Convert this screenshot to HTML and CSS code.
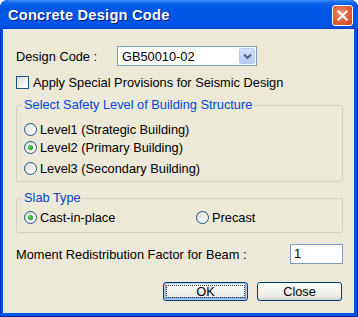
FILE: index.html
```html
<!DOCTYPE html>
<html>
<head>
<meta charset="utf-8">
<link rel="stylesheet" href="styles.css">
</head>
<body>
<div class="window">
  <div class="titlebar">
    <span class="title">Concrete Design Code</span>
    <span class="close">
      <svg width="13" height="13" viewBox="0 0 13 13"><path d="M2.5 2.5 L10.5 10.5 M10.5 2.5 L2.5 10.5" stroke="#fff" stroke-width="2.2" stroke-linecap="square"/></svg>
    </span>
  </div>
  <div class="client">
    <div class="code-row">
      <span class="code-label">Design Code :</span>
      <div class="combo">
        <span class="combo-text">GB50010-02</span>
        <span class="combo-btn">
          <svg width="9" height="7" viewBox="0 0 9 7"><path d="M1 1.5 L4.5 5 L8 1.5" fill="none" stroke="#4D6185" stroke-width="2"/></svg>
        </span>
      </div>
    </div>
    <div class="check-row"><span class="checkbox"></span><span>Apply Special Provisions for Seismic Design</span></div>
    <fieldset class="group safety">
      <legend>Select Safety Level of Building Structure</legend>
      <div class="radio-row r1"><span class="radio"></span><span>Level1 (Strategic Building)</span></div>
      <div class="radio-row r2"><span class="radio checked"></span><span>Level2 (Primary Building)</span></div>
      <div class="radio-row r3"><span class="radio"></span><span>Level3 (Secondary Building)</span></div>
    </fieldset>
    <fieldset class="group slab">
      <legend>Slab Type</legend>
      <div class="slab-grid">
        <div class="radio-row"><span class="radio checked"></span><span>Cast-in-place</span></div>
        <div class="radio-row"><span class="radio"></span><span>Precast</span></div>
      </div>
    </fieldset>
    <div class="moment-row">
      <span>Moment Redistribution Factor for Beam :</span>
      <div class="input">1</div>
    </div>
    <div class="buttons">
      <div class="btn default"><span class="focus">OK</span></div>
      <div class="btn">Close</div>
    </div>
  </div>
</div>
</body>
</html>
```

FILE: styles.css
```css
html, body {
  margin: 0;
  padding: 0;
  background: #ffffff;
}
body {
  width: 358px;
  height: 317px;
  overflow: hidden;
  font-family: "Liberation Sans", Arial, sans-serif;
  font-size: 12.8px;
  color: #000;
}
.window {
  width: 358px;
  height: 317px;
  box-sizing: border-box;
  border-radius: 8px 8px 0 0;
  background: #0055EA;
  box-shadow: inset 1px 0 #0831D9, inset -1px 0 #001EA0, inset 0 -1px #001EA0;
  display: flex;
  flex-direction: column;
  overflow: hidden;
}
.titlebar {
  height: 29px;
  flex: none;
  display: flex;
  align-items: flex-start;
  justify-content: space-between;
  padding: 0 5px 0 8px;
  border-radius: 8px 8px 0 0;
  background: linear-gradient(#3A8CF7 0, #1E74F4 2px, #0A5FEB 4px, #0058E6 8px, #0054E3 50%, #0055EA 80%, #0050E0 93%, #003EC8 100%);
}
.title {
  margin-top: 6px;
  color: #fff;
  font-weight: bold;
  font-size: 14.6px;
  line-height: 18px;
  letter-spacing: 0.25px;
  text-shadow: 1px 1px 0 #0A1883;
}
.close {
  margin-top: 5px;
  width: 21px;
  height: 21px;
  box-sizing: border-box;
  border: 1px solid #fff;
  border-radius: 3px;
  background: radial-gradient(circle at 40% 35%, #F0947C 0, #E4623F 45%, #D0451F 100%);
  display: flex;
  align-items: center;
  justify-content: center;
}
.close svg { display: block; }
.client {
  flex: 1;
  margin: 0 4px 4px 3px;
  background: #ECE9D8;
  padding: 17px 11px 0 13px;
  display: flex;
  flex-direction: column;
}
.code-row {
  display: flex;
  align-items: center;
  height: 20px;
}
.code-label {
  width: 101px;
}
.combo {
  width: 140px;
  height: 20px;
  box-sizing: border-box;
  border: 1px solid #7F9DB9;
  background: #fff;
  display: flex;
  align-items: center;
  justify-content: space-between;
  padding: 0 1px 0 4px;
}
.combo-btn {
  width: 16px;
  height: 16px;
  box-sizing: border-box;
  border-radius: 2px;
  border: 1px solid #B9CDF8;
  background: linear-gradient(#D2E0FD, #B3C9F7);
  display: flex;
  align-items: center;
  justify-content: center;
}
.combo-btn svg { display: block; }
.check-row {
  margin-top: 8px;
  height: 16px;
  display: flex;
  align-items: center;
  gap: 4px;
}
.checkbox {
  width: 13px;
  height: 13px;
  box-sizing: border-box;
  border: 1px solid #1C5180;
  background: linear-gradient(135deg, #DCDCD7 0, #F6F6F4 70%, #FFFFFF 100%);
}
.group {
  margin: 0;
  border: 1px solid #D0D0BF;
  border-radius: 3px;
  padding: 0 6px 0 7px;
  min-width: 0;
}
.group legend {
  color: #0046D5;
  line-height: 14px;
  padding: 0 2px;
  margin-left: -2px;
}
.safety {
  margin-top: 8px;
  padding-bottom: 5px;
}
.radio-row {
  height: 16px;
  display: flex;
  align-items: center;
  gap: 3px;
}
.r1 { margin-top: 9px; }
.r2 { margin-top: 2px; }
.r3 { margin-top: 5px; }
.radio {
  width: 13px;
  height: 13px;
  box-sizing: border-box;
  border-radius: 50%;
  border: 1px solid #1C5180;
  background: linear-gradient(135deg, #DCDCD7 0, #F6F6F4 70%, #FFFFFF 100%);
  display: flex;
  align-items: center;
  justify-content: center;
}
.radio.checked::after {
  content: "";
  width: 5px;
  height: 5px;
  border-radius: 50%;
  background: radial-gradient(circle at 40% 40%, #55D255 0, #21A121 70%);
}
.slab {
  margin-top: 9px;
  padding-bottom: 7px;
}
.slab-grid {
  margin-top: 4px;
  display: grid;
  grid-template-columns: 172px 1fr;
}
.moment-row {
  margin-top: 11px;
  height: 20px;
  display: flex;
  align-items: center;
  justify-content: space-between;
}
.input {
  width: 53px;
  height: 20px;
  box-sizing: border-box;
  border: 1px solid #7F9DB9;
  background: #fff;
  padding-left: 3px;
  line-height: 18px;
}
.buttons {
  margin-top: 18px;
  display: flex;
  justify-content: flex-end;
  gap: 9px;
  padding-right: 1px;
}
.btn {
  width: 85px;
  height: 19px;
  box-sizing: border-box;
  border: 1px solid #003C74;
  border-radius: 3px;
  background: linear-gradient(#FFFFFF 0, #F4F4F0 40%, #ECEBE6 80%, #D6D0C5 100%);
  display: flex;
  align-items: center;
  justify-content: center;
  line-height: 15px;
}
.btn.default {
  box-shadow: inset 0 0 0 1px #B6CDF5, inset 0 -1px 0 2px #89ADE4;
  padding: 2px;
}
.btn .focus {
  flex: 1;
  align-self: stretch;
  border: 1px dotted #333;
  text-align: center;
  line-height: 11px;
}
```
